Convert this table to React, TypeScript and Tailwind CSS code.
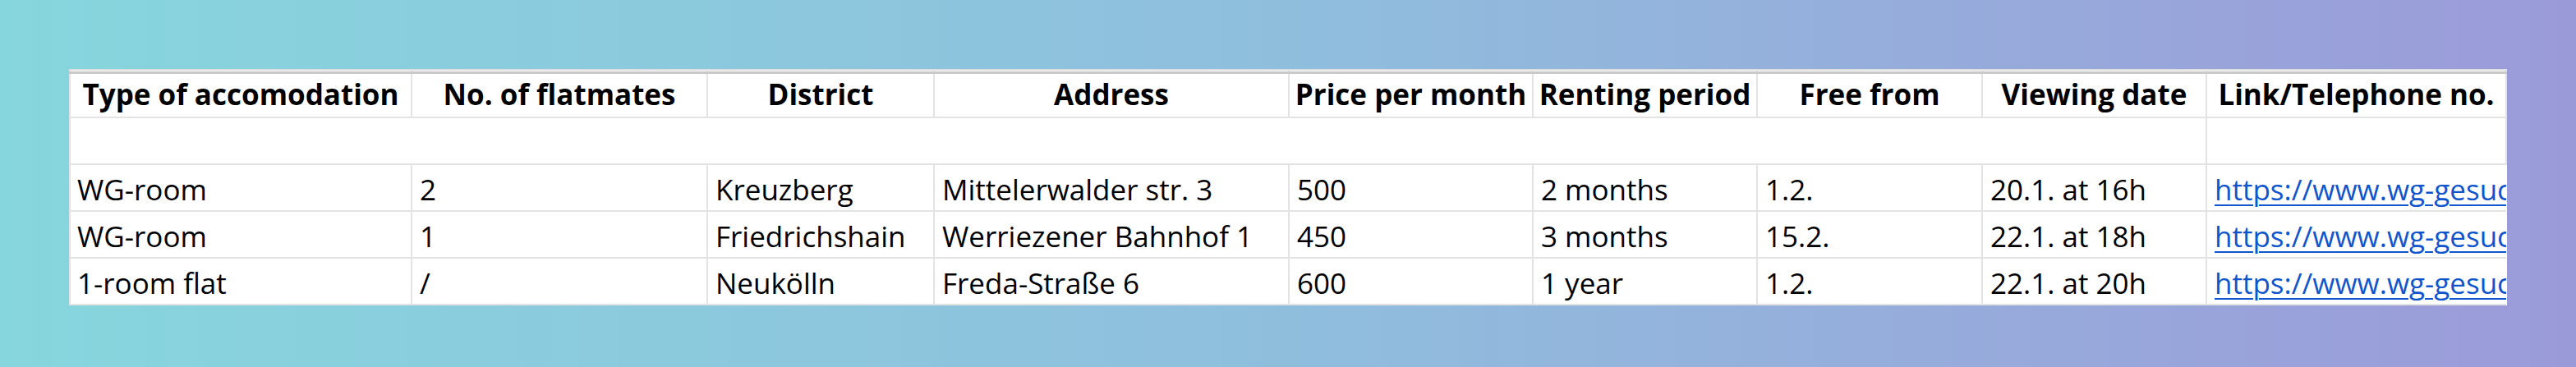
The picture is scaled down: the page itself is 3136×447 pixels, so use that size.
import React from 'react';

interface Listing {
  type: string;
  flatmates: string;
  district: string;
  address: string;
  price: string;
  period: string;
  freeFrom: string;
  viewing: string;
  link: string;
}

const HEADERS = [
  'Type of accomodation',
  'No. of flatmates',
  'District',
  'Address',
  'Price per month',
  'Renting period',
  'Free from',
  'Viewing date',
  'Link/Telephone no.',
];

// Column widths measured off the sheet, in px
const COL_CLASSES = [
  'w-[416px]',
  'w-[360px]',
  'w-[276px]',
  'w-[432px]',
  'w-[297px]',
  'w-[273px]',
  'w-[274px]',
  'w-[273px]',
  'w-[365px]',
];

const LISTINGS: Listing[] = [
  {
    type: 'WG-room',
    flatmates: '2',
    district: 'Kreuzberg',
    address: 'Mittelerwalder str. 3',
    price: '500',
    period: '2 months',
    freeFrom: '1.2.',
    viewing: '20.1. at 16h',
    link: 'https://www.wg-gesucht.de/wg-zimmer-in-Berlin-Kreuzberg.html',
  },
  {
    type: 'WG-room',
    flatmates: '1',
    district: 'Friedrichshain',
    address: 'Werriezener Bahnhof 1',
    price: '450',
    period: '3 months',
    freeFrom: '15.2.',
    viewing: '22.1. at 18h',
    link: 'https://www.wg-gesucht.de/wg-zimmer-in-Berlin-Friedrichshain.html',
  },
  {
    type: '1-room flat',
    flatmates: '/',
    district: 'Neukölln',
    address: 'Freda-Straße 6',
    price: '600',
    period: '1 year',
    freeFrom: '1.2.',
    viewing: '22.1. at 20h',
    link: 'https://www.wg-gesucht.de/1-zimmer-wohnungen-in-Berlin-Neukoelln.html',
  },
];

const cell = 'border-2 border-[#e3e3e3] px-[9px] pt-[4px] whitespace-nowrap overflow-hidden';

const App = () => {
  return (
    <div className="w-full h-[447px] bg-gradient-to-r from-[#86d6dd] via-[#8fbedd] to-[#9b9ad9] pt-[84px] pl-[84px]">
      <table
        className="table-fixed border-collapse bg-white text-black text-[35px] leading-none w-[2966px]"
        style={{ fontFamily: '"Open Sans", "Noto Sans", sans-serif' }}
      >
        <colgroup>
          {COL_CLASSES.map((c) => (
            <col key={c + Math.random()} className={c} />
          ))}
        </colgroup>
        <thead>
          <tr className="h-[3px]">
            {HEADERS.map((h) => (
              <td
                key={h}
                className="p-0 border-x-2 border-t-2 border-b-[3px] border-x-[#e3e3e3] border-t-[#dedede] border-b-[#c9c9c9]"
              ></td>
            ))}
          </tr>
          <tr className="h-[55px]">
            {HEADERS.map((h) => (
              <th
                key={h}
                className="border-2 border-t-0 border-[#e3e3e3] px-[4px] pb-[2px] font-bold text-center whitespace-nowrap overflow-hidden"
              >
                {h}
              </th>
            ))}
          </tr>
        </thead>
        <tbody>
          <tr className="h-[57px]">
            <td colSpan={8} className={cell}></td>
            <td className={cell}></td>
          </tr>
          {LISTINGS.map((l) => (
            <tr key={l.link} className="h-[57px]">
              <td className={`${cell} pl-[8px]`}>{l.type}</td>
              <td className={cell}>{l.flatmates}</td>
              <td className={cell}>{l.district}</td>
              <td className={cell}>{l.address}</td>
              <td className={cell}>{l.price}</td>
              <td className={cell}>{l.period}</td>
              <td className={cell}>{l.freeFrom}</td>
              <td className={cell}>{l.viewing}</td>
              <td className={`${cell} border-r-0`}>
                <a href="#" className="text-[#1155cc] underline decoration-2 underline-offset-[5px]">
                  {l.link}
                </a>
              </td>
            </tr>
          ))}
        </tbody>
      </table>
    </div>
  );
};

export default App;
